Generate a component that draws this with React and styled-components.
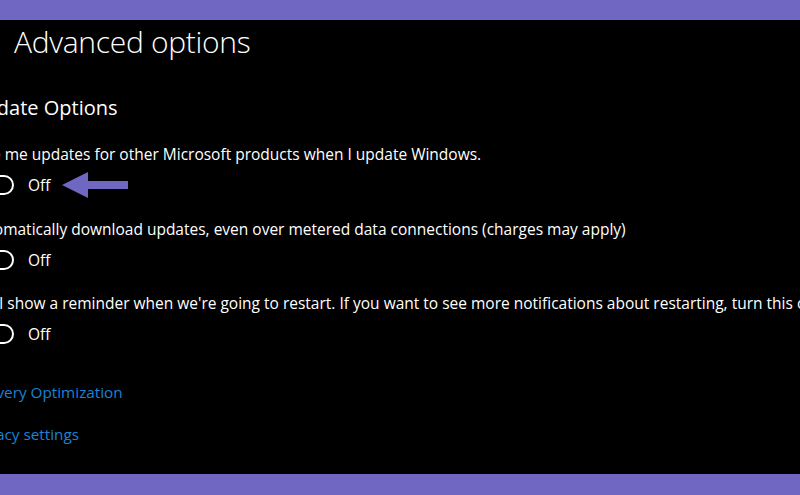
import React from "react";
import styled, { createGlobalStyle } from "styled-components";

const GlobalStyle = createGlobalStyle`
  html, body { margin: 0; padding: 0; background: #000; }
  body { font-family: "Open Sans", "Noto Sans", Arial, sans-serif; }
`;

const Frame = styled.div`
  width: 800px;
  height: 495px;
  display: flex;
  flex-direction: column;
  overflow: hidden;
  background: #000;
`;

const Band = styled.div`
  height: ${(p) => p.$h}px;
  flex: none;
  background: #6f67c1;
`;

const Main = styled.main`
  flex: 1;
  display: flex;
  flex-direction: column;
  overflow: hidden;
  color: #fff;
  white-space: nowrap;
`;

const Title = styled.h1`
  margin: 0;
  padding-left: 14px;
  height: 44px;
  font-size: 30px;
  line-height: 44px;
  font-weight: 300;
  letter-spacing: -0.3px;
`;

const Content = styled.div`
  margin-left: -31px;
  display: flex;
  flex-direction: column;
`;

const Heading = styled.h2`
  margin: 30px 0 0 1px;
  height: 28px;
  font-size: 20px;
  line-height: 28px;
  font-weight: 400;
`;

const Group = styled.section`
  margin-top: ${(p) => p.$top}px;
  display: flex;
  flex-direction: column;
  gap: 11px;
`;

const Label = styled.div`
  height: 20px;
  font-size: 15.5px;
  line-height: 20px;
`;

const ToggleRow = styled.div`
  height: 20px;
  display: flex;
  align-items: center;
  padding-left: 1px;
`;

const Toggle = styled.span`
  position: relative;
  flex: none;
  width: 44px;
  height: 20px;
  box-sizing: border-box;
  border: 2px solid #fff;
  border-radius: 10px;

  &::after {
    content: "";
    position: absolute;
    left: 3px;
    top: 3px;
    width: 10px;
    height: 10px;
    border-radius: 50%;
    background: #fff;
  }
`;

const State = styled.span`
  margin-left: 14px;
  font-size: 15.5px;
  line-height: 20px;
`;

const Arrow = styled.svg`
  flex: none;
  margin-left: 11px;
  overflow: visible;
`;

const Link = styled.a`
  display: block;
  margin-top: ${(p) => p.$top}px;
  height: 20px;
  font-size: 15.3px;
  line-height: 20px;
  color: #1883d7;
  text-decoration: none;
`;

const options = [
  { top: 22, text: "Give me updates for other Microsoft products when I update Windows.", arrow: true },
  { top: 24, text: "Automatically download updates, even over metered data connections (charges may apply)" },
  {
    top: 23,
    text:
      "We'll show a reminder when we're going to restart. If you want to see more notifications about restarting, turn this on.",
  },
];

export default function App() {
  return (
    <>
      <GlobalStyle />
      <Frame>
        <Band $h={20} />
        <Main>
          <Title>Advanced options</Title>
          <Content>
            <Heading>Update Options</Heading>
            {options.map((o, i) => (
              <Group key={i} $top={o.top}>
                <Label>{o.text}</Label>
                <ToggleRow>
                  <Toggle role="switch" aria-checked="false" />
                  <State>Off</State>
                  {o.arrow && (
                    <Arrow width="66" height="28" viewBox="0 0 66 28" aria-hidden="true">
                      <path d="M0 14 L26 1 L26 10 L66 10 L66 18 L26 18 L26 27 Z" fill="#6f67c1" />
                    </Arrow>
                  )}
                </ToggleRow>
              </Group>
            ))}
            <Link $top={38} href="#">Delivery Optimization</Link>
            <Link $top={22} href="#">Privacy settings</Link>
          </Content>
        </Main>
        <Band $h={21} />
      </Frame>
    </>
  );
}
